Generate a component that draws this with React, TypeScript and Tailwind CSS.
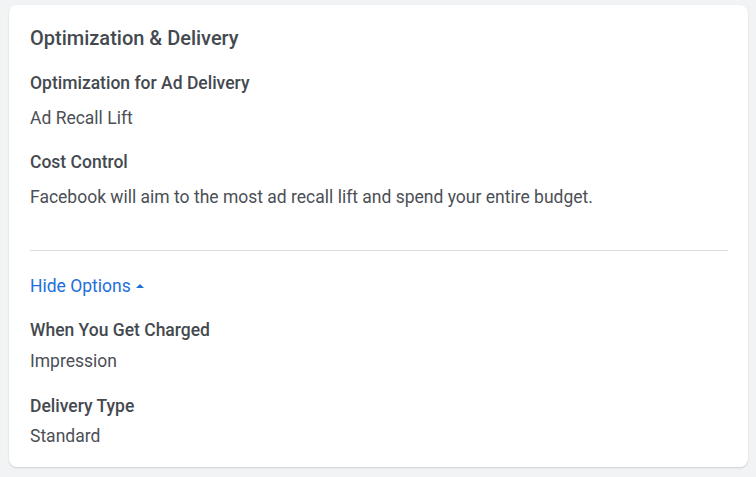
export default function App() {
  return (
    <div className="min-h-[477px] bg-[#f2f3f5] px-[9px] pt-[5px] pb-[10px] font-['Roboto',sans-serif] text-[#444950]">
      <div className="w-[739px] rounded-lg bg-white px-[21px] pt-[21px] pb-[20px] shadow-[0_1px_2px_rgba(0,0,0,0.15)]">
        <h2 className="text-[20px] leading-[24px] font-medium">Optimization &amp; Delivery</h2>

        <div className="mt-[22px] text-[17.5px] leading-[22px] font-medium">Optimization for Ad Delivery</div>
        <div className="mt-[13px] text-[17.5px] leading-[22px] text-[#4b4f56]">Ad Recall Lift</div>

        <div className="mt-[22px] text-[17.5px] leading-[22px] font-medium">Cost Control</div>
        <div className="mt-[13px] text-[17.5px] leading-[22px] text-[#4b4f56]">
          Facebook will aim to the most ad recall lift and spend your entire budget.
        </div>

        <div className="mt-[42px] mr-[-1px] h-px bg-[#dadde1]" />

        <button className="mt-[24px] flex items-center gap-[4px] text-[17.5px] leading-[22px] text-[#216fdb]">
          Hide Options
          <svg width="10" height="6" viewBox="0 0 10 6" className="mt-[-1px]">
            <path d="M1 5 L5 1 L9 5 Z" fill="currentColor" />
          </svg>
        </button>

        <div className="mt-[22px] text-[17.5px] leading-[22px] font-medium">When You Get Charged</div>
        <div className="mt-[9px] text-[17.5px] leading-[22px] text-[#4b4f56]">Impression</div>

        <div className="mt-[23px] text-[17.5px] leading-[22px] font-medium">Delivery Type</div>
        <div className="mt-[8px] text-[17.5px] leading-[22px] text-[#4b4f56]">Standard</div>
      </div>
    </div>
  )
}
